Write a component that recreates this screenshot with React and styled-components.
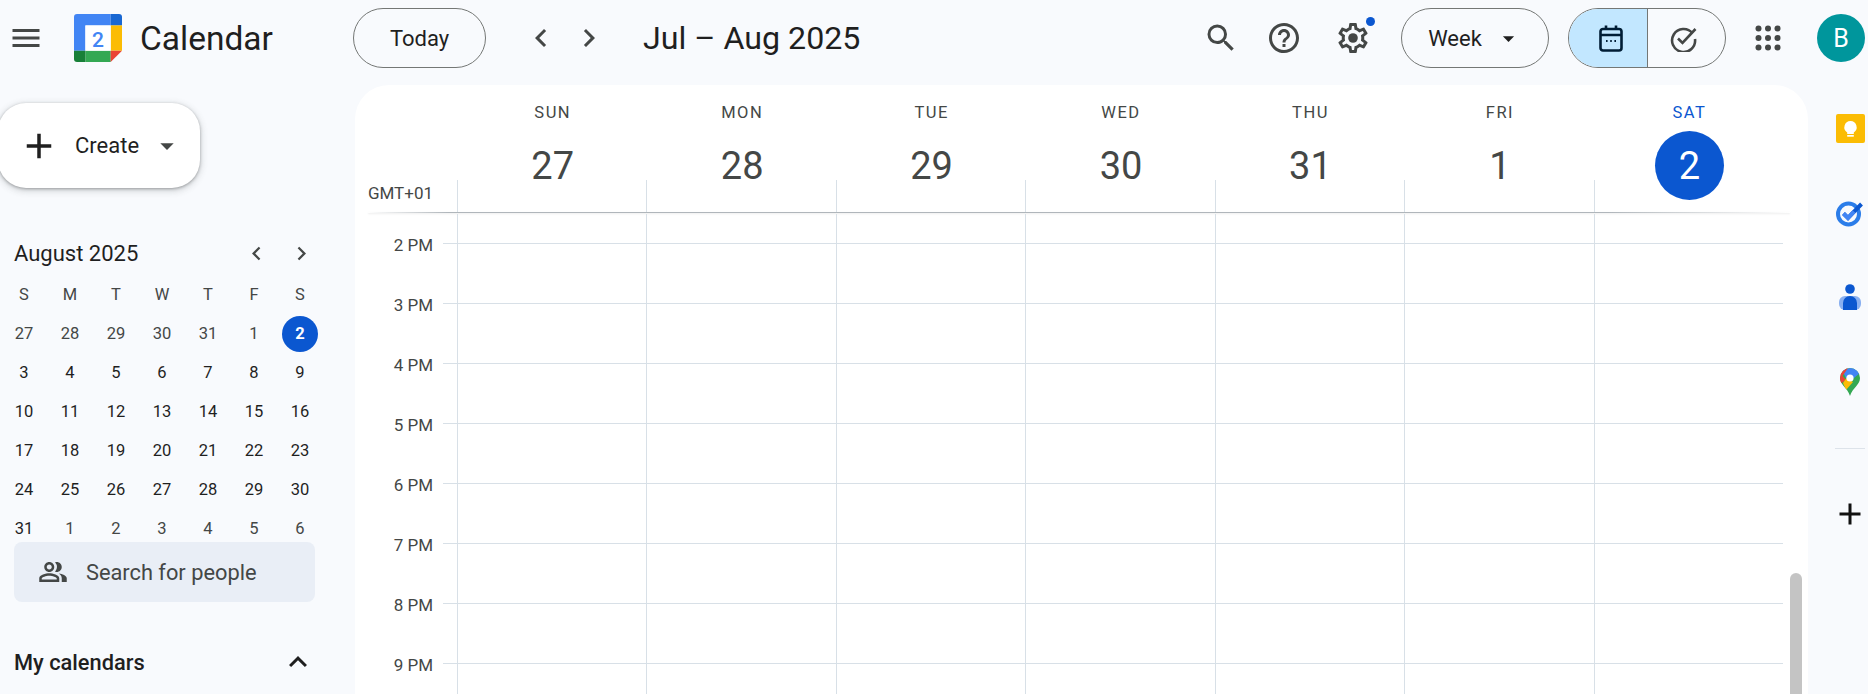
import styled, { createGlobalStyle } from "styled-components";
import {
  MdAdd,
  MdArrowDropDown,
  MdChevronLeft,
  MdChevronRight,
  MdHelpOutline,
  MdKeyboardArrowUp,
  MdMenu,
  MdOutlinePeopleAlt,
  MdSearch,
} from "react-icons/md";

const GlobalStyle = createGlobalStyle`
  html, body {
    margin: 0;
    height: 100%;
    overflow: hidden;
    background: #f8fafd;
    font-family: Roboto, "Noto Sans", Arial, sans-serif;
  }
`;

const Page = styled.div`
  width: 1868px;
  height: 694px;
  overflow: hidden;
  display: flex;
  flex-direction: column;
`;

const TopBar = styled.header`
  height: 76px;
  margin-bottom: 9px;
  padding-right: 3px;
  flex: none;
  display: flex;
  align-items: center;
`;

const Brand = styled.div`
  width: 353px;
  flex: none;
  display: flex;
  align-items: center;
  padding-left: 8px;
  box-sizing: border-box;
`;

const IconSlot = styled.span`
  width: 36px;
  height: 36px;
  flex: none;
  display: flex;
  align-items: center;
  justify-content: center;
  position: relative;
  margin-left: ${(p) => p.$ml || 0}px;
  color: #444746;
`;

const LogoWrap = styled.span`
  margin-left: 30px;
  display: flex;
`;

const ProductName = styled.span`
  margin-left: 18px;
  font-size: 33.5px;
  color: #1f1f1f;
`;

const PillButton = styled.button`
  width: ${(p) => p.$w}px;
  height: 60px;
  flex: none;
  margin-left: ${(p) => p.$ml || 0}px;
  border: 1px solid #747775;
  border-radius: 30px;
  background: transparent;
  color: #1f1f1f;
  font: 400 22px Roboto, sans-serif;
  display: flex;
  align-items: center;
  justify-content: center;
  gap: ${(p) => p.$gap || 0}px;
  padding: 0;
`;

const DateTitle = styled.h1`
  margin: 0 0 0 36px;
  font-size: 32.2px;
  font-weight: 400;
  color: #1f1f1f;
`;

const Spacer = styled.div`
  flex: 1;
`;

const NotifyDot = styled.span`
  position: absolute;
  top: -3px;
  right: -4px;
  width: 9px;
  height: 9px;
  border-radius: 50%;
  background: #0b57d0;
`;

const ViewToggle = styled.div`
  width: 158px;
  height: 60px;
  flex: none;
  margin-left: 19px;
  box-sizing: border-box;
  border: 1px solid #747775;
  border-radius: 30px;
  overflow: hidden;
  display: flex;
`;

const ToggleSide = styled.div`
  flex: ${(p) => (p.$active ? "0 0 79px" : "1")};
  box-sizing: border-box;
  padding: ${(p) => (p.$active ? "0 0 0 6px" : "0 6px 0 0")};
  display: flex;
  align-items: center;
  justify-content: center;
  background: ${(p) => (p.$active ? "#c2e7ff" : "transparent")};
  border-right: ${(p) => (p.$active ? "1px solid #747775" : "none")};
`;

const Avatar = styled.div`
  width: 48px;
  height: 48px;
  flex: none;
  margin-left: 31px;
  border-radius: 50%;
  background: #00969c;
  color: #fff;
  font-size: 25px;
  display: flex;
  align-items: center;
  justify-content: center;
`;

const Main = styled.div`
  flex: 1;
  display: flex;
  min-height: 0;
`;

const Sidebar = styled.aside`
  width: 355px;
  flex: none;
`;

const CreateButton = styled.button`
  width: 202px;
  height: 85px;
  margin: 18px 0 0 -2px;
  border: 0;
  border-radius: 28px;
  background: #fff;
  box-shadow: 0 1px 3px rgba(60, 64, 67, 0.4), 0 2px 7px 1px rgba(60, 64, 67, 0.2);
  color: #1f1f1f;
  font: 400 22px Roboto, sans-serif;
  display: flex;
  align-items: center;
  padding: 0 0 0 20px;
`;

const CreateLabel = styled.span`
  margin-left: 15px;
`;

const CreateCaret = styled.span`
  margin-left: 12px;
  display: flex;
  color: #444746;
`;

const MiniHeader = styled.div`
  width: 301px;
  height: 30px;
  margin: 50px 0 7px;
  padding-left: 14px;
  display: flex;
  align-items: center;
  justify-content: space-between;
  font-size: 22px;
  color: #1f1f1f;
`;

const MiniNav = styled.div`
  display: flex;
  gap: 18px;
  color: #444746;
`;

const MiniGrid = styled.div`
  padding-left: 1px;
  display: grid;
  grid-template-columns: repeat(7, 46px);
  grid-auto-rows: 39px;
`;

const WeekLetter = styled.div`
  height: 38px;
  font-size: 16.5px;
  color: #444746;
  display: flex;
  align-items: center;
  justify-content: center;
`;

const MiniDay = styled.div`
  font-size: 16.5px;
  font-weight: ${(p) => (p.$selected ? 700 : 400)};
  color: ${(p) => (p.$selected ? "#fff" : p.$muted ? "#444746" : "#1f1f1f")};
  display: flex;
  align-items: center;
  justify-content: center;
  & > span {
    width: 36px;
    height: 36px;
    border-radius: 50%;
    background: ${(p) => (p.$selected ? "#0b57d0" : "transparent")};
    display: flex;
    align-items: center;
    justify-content: center;
  }
`;

const PeopleSearch = styled.div`
  position: relative;
  width: 301px;
  height: 60px;
  margin: -6px 0 0 14px;
  padding-left: 24px;
  box-sizing: border-box;
  border-radius: 8px;
  background: #e9eef6;
  color: #444746;
  font-size: 21.8px;
  display: flex;
  align-items: center;
  gap: 18px;
`;

const SectionRow = styled.div`
  width: 302px;
  height: 40px;
  margin-top: 40px;
  padding-left: 14px;
  display: flex;
  align-items: center;
  justify-content: space-between;
  font-size: 21.8px;
  font-weight: 500;
  color: #1f1f1f;
`;

const Panel = styled.main`
  position: relative;
  width: 1453px;
  flex: none;
  background: #fff;
  border-radius: 34px 34px 0 0;
  overflow: hidden;
`;

const WeekHeader = styled.div`
  height: 127px;
  display: grid;
  grid-template-columns: 102px repeat(7, 189.45px);
`;

const ZoneCell = styled.div`
  padding: 0 24px 9px 0;
  display: flex;
  align-items: flex-end;
  justify-content: flex-end;
  font-size: 17px;
  color: #444746;
`;

const DayHead = styled.div`
  position: relative;
  display: flex;
  flex-direction: column;
  align-items: center;
  padding: 16px 0 0 2px;
  &::after {
    content: "";
    position: absolute;
    left: 0;
    bottom: 0;
    height: 32px;
    border-left: 1px solid #d8e0e7;
  }
`;

const DayName = styled.div`
  height: 24px;
  line-height: 24px;
  font-size: 16.5px;
  letter-spacing: 1.5px;
  color: ${(p) => (p.$today ? "#0b57d0" : "#444746")};
`;

const DayNumber = styled.div`
  position: relative;
  z-index: 1;
  width: 69px;
  height: 69px;
  margin-top: 6px;
  border-radius: 50%;
  background: ${(p) => (p.$today ? "#0b57d0" : "transparent")};
  color: ${(p) => (p.$today ? "#fff" : "#444746")};
  font-size: 38px;
  display: flex;
  align-items: center;
  justify-content: center;
`;

const HeaderRule = styled.div`
  height: 1px;
  margin: 0 18px 1px 13px;
  box-shadow: 0 1px 2px rgba(60, 64, 67, 0.12);
  background: linear-gradient(
    to right,
    rgba(170, 176, 182, 0) 0,
    #b0b6bb 80px,
    #b0b6bb 1240px,
    rgba(170, 176, 182, 0) 100%
  );
`;

const HourRow = styled.div`
  height: ${(p) => p.$h}px;
  display: grid;
  grid-template-columns: 88px 14px repeat(7, 189.45px);
`;

const HourLabel = styled.div`
  padding-right: 10px;
  margin-top: -9px;
  text-align: right;
  font-size: 17px;
  line-height: 22px;
  color: #444746;
`;

const Tick = styled.div`
  border-top: ${(p) => (p.$first ? "none" : "1px solid #d8e0e7")};
`;

const Cell = styled.div`
  border-left: 1px solid #d8e0e7;
  border-top: ${(p) => (p.$first ? "none" : "1px solid #d8e0e7")};
`;

const ScrollThumb = styled.div`
  position: absolute;
  top: 488px;
  right: 6px;
  bottom: 0;
  width: 12px;
  border-radius: 6px 6px 0 0;
  background: #c4c4c4;
`;

const Rail = styled.aside`
  flex: 1;
  padding: 1px 0 0 24px;
  display: flex;
  flex-direction: column;
  align-items: center;
`;

const RailItem = styled.div`
  width: 36px;
  height: 84.5px;
  display: flex;
  align-items: center;
  justify-content: center;
`;

const RailDivider = styled.div`
  width: 30px;
  height: 1px;
  margin: 24px 0 47px;
  background: #dde3ea;
`;

const AddonButton = styled.div`
  height: 36px;
  display: flex;
  align-items: center;
  color: #111;
`;

const GearIcon = () => (
  <svg width="36" height="36" viewBox="0 0 24 24" fill="currentColor">
    <path d="M19.43 12.98c.04-.32.07-.64.07-.98 0-.34-.03-.66-.07-.98l2.11-1.65c.19-.15.24-.42.12-.64l-2-3.46c-.09-.16-.26-.25-.44-.25-.06 0-.12.01-.17.03l-2.49 1c-.52-.4-1.08-.73-1.69-.98l-.38-2.65C14.46 2.18 14.25 2 14 2h-4c-.25 0-.46.18-.49.42l-.38 2.65c-.61.25-1.17.59-1.69.98l-2.49-1c-.06-.02-.12-.03-.18-.03-.17 0-.34.09-.43.25l-2 3.46c-.13.22-.07.49.12.64l2.11 1.65c-.04.32-.07.65-.07.98 0 .33.03.66.07.98l-2.11 1.65c-.19.15-.24.42-.12.64l2 3.46c.09.16.26.25.44.25.06 0 .12-.01.17-.03l2.49-1c.52.4 1.08.73 1.69.98l.38 2.65c.03.24.24.42.49.42h4c.25 0 .46-.18.49-.42l.38-2.65c.61-.25 1.17-.59 1.69-.98l2.49 1c.06.02.12.03.18.03.17 0 .34-.09.43-.25l2-3.46c.12-.22.07-.49-.12-.64l-2.11-1.65zm-1.98-1.71c.04.31.05.52.05.73 0 .21-.02.43-.05.73l-.14 1.13.89.7 1.08.84-.7 1.21-1.27-.51-1.04-.42-.9.68c-.43.32-.84.56-1.25.73l-1.06.43-.16 1.13-.2 1.35h-1.4l-.19-1.35-.16-1.13-1.06-.43c-.43-.18-.83-.41-1.23-.71l-.91-.7-1.06.43-1.27.51-.7-1.21 1.08-.84.89-.7-.14-1.13c-.03-.31-.05-.54-.05-.74s.02-.43.05-.73l.14-1.13-.89-.7-1.08-.84.7-1.21 1.27.51 1.04.42.9-.68c.43-.32.84-.56 1.25-.73l1.06-.43.16-1.13.2-1.35h1.39l.19 1.35.16 1.13 1.06.43c.43.18.83.41 1.23.71l.91.7 1.06-.43 1.27-.51.7 1.21-1.07.85-.89.7.14 1.13z" />
    <circle cx="12" cy="12" r="3.2" />
  </svg>
);

const AppsIcon = () => (
  <svg width="26" height="26" viewBox="0 0 26 26" fill="currentColor">
    {[3.5, 13, 22.5].map((y) =>
      [3.5, 13, 22.5].map((x) => <circle key={`${x}-${y}`} cx={x} cy={y} r="3" />)
    )}
  </svg>
);

const CalendarLogo = () => (
  <svg width="48" height="48" viewBox="0 0 48 48">
    <path d="M3 0h33.700v11.400H11.400V36.700H0V3a3 3 0 0 1 3-3z" fill="#4285f4" />
    <path d="M36.700 0H45a3 3 0 0 1 3 3v8.400H36.700z" fill="#1967d2" />
    <rect x="36.700" y="11.400" width="11.300" height="25.300" fill="#fbbc04" />
    <rect x="11.400" y="36.700" width="25.300" height="11.300" fill="#34a853" />
    <path d="M0 36.700h11.400V48H3a3 3 0 0 1-3-3z" fill="#188038" />
    <path d="M36.700 36.700H48L36.700 48z" fill="#ea4335" />
    <rect x="11.400" y="11.400" width="25.300" height="25.300" fill="#fff" />
    <text x="24" y="32.500" textAnchor="middle" fontSize="21" fontWeight="500" fontFamily="Roboto" fill="#4285f4">
      2
    </text>
  </svg>
);

const CalendarViewIcon = () => (
  <svg width="24" height="27" viewBox="0 0 24 27" fill="none" stroke="#001d35" strokeWidth="2.6">
    <rect x="1.500" y="4" width="21" height="21.500" rx="2.500" />
    <path d="M1.500 10h21" />
    <path d="M7 0.500v4M17 0.500v4" />
    <path d="M7 16h1.600M11.200 16h1.600M15.400 16H17" strokeWidth="2" />
  </svg>
);

const TaskViewIcon = () => (
  <svg width="27" height="27" viewBox="0 0 27 27" fill="none" stroke="#444746" strokeWidth="2.600">
    <path d="M22.500 8.200A11.500 11.500 0 1 0 25 14" />
    <path d="M8 13.500l4.500 4.500L25.500 4" />
  </svg>
);

const KeepIcon = () => (
  <svg width="29" height="29" viewBox="0 0 29 29">
    <rect width="29" height="29" rx="2" fill="#fbbc04" />
    <path d="M14.500 7a6.200 6.200 0 0 0-3.300 11.400V20h6.600v-1.600A6.200 6.200 0 0 0 14.500 7z" fill="#fff" />
    <rect x="11.200" y="21" width="6.600" height="1.700" fill="#fff" />
  </svg>
);

const TasksIcon = () => (
  <svg width="28" height="28" viewBox="0 0 28 28" fill="none">
    <circle cx="12.500" cy="15" r="10.500" stroke="#2b7de9" strokeWidth="4" />
    <path d="M7.500 14.500l4.500 4.500L25.500 5" stroke="#0b57d0" strokeWidth="4" />
    <path d="M7.500 14.500l4.500 4.500 6-6.500" stroke="#4285f4" strokeWidth="4" />
  </svg>
);

const ContactsIcon = () => (
  <svg width="22" height="26" viewBox="0 0 22 26">
    <rect x="0" y="12" width="22" height="14" rx="6" fill="#8ab0f0" />
    <circle cx="11" cy="5" r="4.800" fill="#0b57d0" />
    <path d="M4 19a7 7 0 0 1 14 0v7H4z" fill="#0b57d0" />
  </svg>
);

const MapsIcon = () => (
  <svg width="20" height="28" viewBox="0 0 20 28">
    <defs>
      <clipPath id="pin">
        <path d="M10 0a10 10 0 0 1 10 10c0 3-1.500 5.500-3.600 8-2.400 2.900-5.400 6-6.400 10-1-4-4-7.100-6.400-10C1.500 15.500 0 13 0 10A10 10 0 0 1 10 0z" />
      </clipPath>
    </defs>
    <g clipPath="url(#pin)">
      <rect width="20" height="28" fill="#34a853" />
      <path d="M2 2L10 0h10v5L14 10H6z" fill="#4285f4" />
      <path d="M0 0h8L2.500 8 6 12 0 16z" fill="#ea4335" />
      <path d="M3 15L6.500 10 13 14 6 22z" fill="#fbbc04" />
    </g>
    <circle cx="10" cy="10" r="3.600" fill="#fff" />
  </svg>
);

const WEEKDAYS = ["S", "M", "T", "W", "T", "F", "S"];
const MINI_DAYS = [
  27, 28, 29, 30, 31, 1, 2, 3, 4, 5, 6, 7, 8, 9, 10, 11, 12, 13, 14, 15, 16, 17, 18, 19, 20, 21, 22,
  23, 24, 25, 26, 27, 28, 29, 30, 31, 1, 2, 3, 4, 5, 6,
];
const WEEK = [
  { name: "SUN", date: 27 },
  { name: "MON", date: 28 },
  { name: "TUE", date: 29 },
  { name: "WED", date: 30 },
  { name: "THU", date: 31 },
  { name: "FRI", date: 1 },
  { name: "SAT", date: 2, today: true },
];
const HOURS = ["2 PM", "3 PM", "4 PM", "5 PM", "6 PM", "7 PM", "8 PM", "9 PM"];

const App = () => {
  return (
    <Page>
      <GlobalStyle />
      <TopBar>
        <Brand>
          <IconSlot>
            <MdMenu size={36} />
          </IconSlot>
          <LogoWrap>
            <CalendarLogo />
          </LogoWrap>
          <ProductName>Calendar</ProductName>
        </Brand>
        <PillButton $w={133}>Today</PillButton>
        <IconSlot $ml={37}>
          <MdChevronLeft size={36} />
        </IconSlot>
        <IconSlot $ml={12}>
          <MdChevronRight size={36} />
        </IconSlot>
        <DateTitle>Jul – Aug 2025</DateTitle>
        <Spacer />
        <IconSlot>
          <MdSearch size={36} />
        </IconSlot>
        <IconSlot $ml={27}>
          <MdHelpOutline size={36} />
        </IconSlot>
        <IconSlot $ml={33}>
          <GearIcon />
          <NotifyDot />
        </IconSlot>
        <PillButton $w={148} $ml={30} $gap={13}>
          Week
          <MdArrowDropDown size={27} />
        </PillButton>
        <ViewToggle>
          <ToggleSide $active>
            <CalendarViewIcon />
          </ToggleSide>
          <ToggleSide>
            <TaskViewIcon />
          </ToggleSide>
        </ViewToggle>
        <IconSlot $ml={24}>
          <AppsIcon />
        </IconSlot>
        <Avatar>B</Avatar>
      </TopBar>

      <Main>
        <Sidebar>
          <CreateButton>
            <MdAdd size={42} />
            <CreateLabel>Create</CreateLabel>
            <CreateCaret>
              <MdArrowDropDown size={32} />
            </CreateCaret>
          </CreateButton>

          <MiniHeader>
            August 2025
            <MiniNav>
              <MdChevronLeft size={27} />
              <MdChevronRight size={27} />
            </MiniNav>
          </MiniHeader>
          <MiniGrid>
            {WEEKDAYS.map((d, i) => (
              <WeekLetter key={i}>{d}</WeekLetter>
            ))}
            {MINI_DAYS.map((d, i) => (
              <MiniDay key={i} $muted={i < 6 || i > 35} $selected={i === 6}>
                <span>{d}</span>
              </MiniDay>
            ))}
          </MiniGrid>
          <PeopleSearch>
            <MdOutlinePeopleAlt size={30} />
            Search for people
          </PeopleSearch>
          <SectionRow>
            My calendars
            <MdKeyboardArrowUp size={36} />
          </SectionRow>
        </Sidebar>

        <Panel>
          <WeekHeader>
            <ZoneCell>GMT+01</ZoneCell>
            {WEEK.map((d) => (
              <DayHead key={d.name}>
                <DayName $today={d.today}>{d.name}</DayName>
                <DayNumber $today={d.today}>{d.date}</DayNumber>
              </DayHead>
            ))}
          </WeekHeader>
          <HeaderRule />
          <HourRow $h={29}>
            <div />
            <Tick $first />
            {WEEK.map((d) => (
              <Cell key={d.name} $first />
            ))}
          </HourRow>
          {HOURS.map((h) => (
            <HourRow key={h} $h={60}>
              <HourLabel>{h}</HourLabel>
              <Tick />
              {WEEK.map((d) => (
                <Cell key={d.name} />
              ))}
            </HourRow>
          ))}
          <ScrollThumb />
        </Panel>

        <Rail>
          <RailItem>
            <KeepIcon />
          </RailItem>
          <RailItem>
            <TasksIcon />
          </RailItem>
          <RailItem>
            <ContactsIcon />
          </RailItem>
          <RailItem>
            <MapsIcon />
          </RailItem>
          <RailDivider />
          <AddonButton>
            <MdAdd size={36} />
          </AddonButton>
        </Rail>
      </Main>
    </Page>
  );
};

export default App;
